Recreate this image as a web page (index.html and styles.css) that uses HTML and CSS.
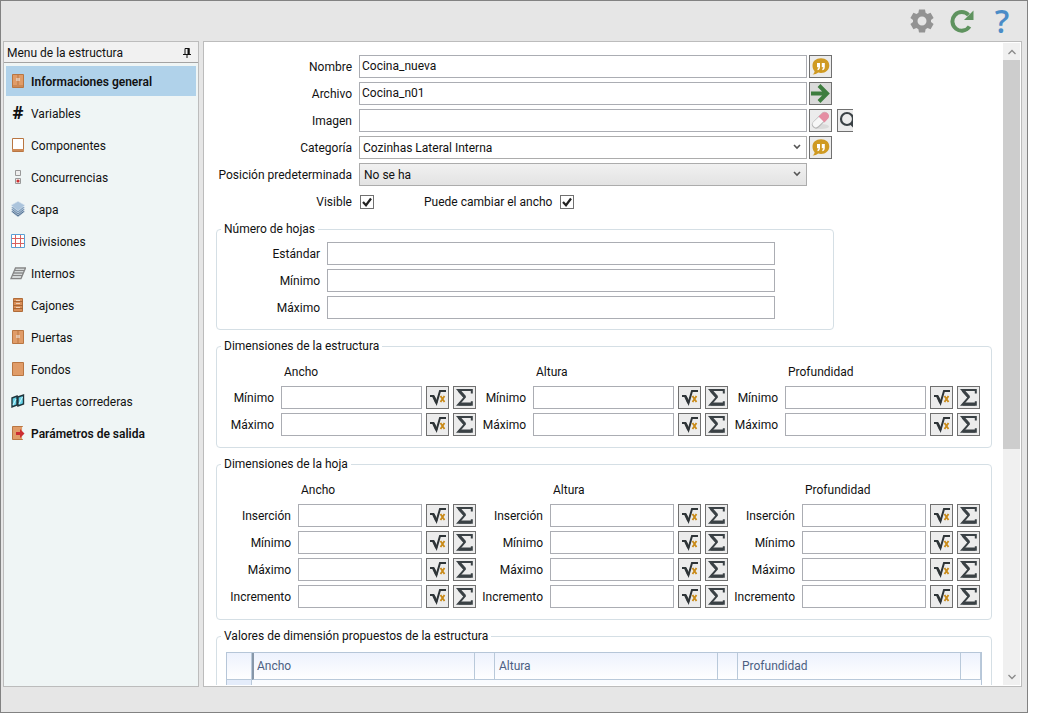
FILE: index.html
```html
<!DOCTYPE html>
<html lang="es">
<head>
<meta charset="utf-8">
<title>Menu de la estructura</title>
<link rel="stylesheet" href="styles.css">
</head>
<body>
<svg class="defs" aria-hidden="true">
  <symbol id="root" viewBox="0 0 21 21">
    <path d="M3 9h3.500l3 7L13 4h6" fill="none" stroke="#2f3538" stroke-width="2"/>
    <path d="M6.500 9.500l3 6.500" stroke="#2f3538" stroke-width="2.600"/>
    <path d="M13.500 9l4 6M17.500 9l-4 6" stroke="#c98a17" stroke-width="1.800"/>
  </symbol>
  <symbol id="sum" viewBox="0 0 21 21">
    <path d="M17.800 6.500V3H4.200l6.500 7.300L4.200 17.800h13.600v-3.600" fill="none" stroke="#3a4145" stroke-width="2"/>
    <path d="M5 3.500l6 6.800" stroke="#3a4145" stroke-width="3"/>
    <path d="M5 17h12" stroke="#3a4145" stroke-width="3"/>
  </symbol>
  <symbol id="quote" viewBox="0 0 21 21">
    <path d="M11 2.200c5 0 8.300 3 8.300 7.300s-3.500 7.500-8.300 7.500c-1 0-2-.1-2.800-.4-1.500 1.400-3.500 2-5.700 1.900 1.300-.8 2-1.900 2.100-3.300C3.200 13.800 2.500 12 2.500 9.500c0-4.300 3.500-7.300 8.500-7.300z" fill="#cf9a22"/>
    <path d="M7 7h3v4c0 2-1 3-2.500 3.200v-1.500c.7-.2 1-.8 1-1.500H7zM11.800 7h3v4c0 2-1 3-2.500 3.200v-1.500c.7-.2 1-.8 1-1.500h-1.500z" fill="#fff"/>
  </symbol>
  <symbol id="chev" viewBox="0 0 8 6"><path d="M1 1l3 3 3-3" fill="none" stroke="#555" stroke-width="1.600"/></symbol>
  <symbol id="tick" viewBox="0 0 14 14"><path d="M3 7l3 3.200 5-6.700" fill="none" stroke="#222" stroke-width="2.200"/></symbol>
</svg>

<div class="window">
  <header class="toolbar">
    <button class="tool" aria-label="Configuración"><svg viewBox="0 0 24 24"><path fill="#939393" fill-rule="evenodd" d="M9 .5h6l.6 3.300 1.900 1.100 3.100-1.100 3 5.100-2.600 2.100v2l2.600 2.100-3 5.100-3.100-1.100-1.900 1.100-.6 3.300H9l-.6-3.300-1.900-1.100-3.100 1.100-3-5.100L3 13V11L.4 8.900l3-5.100 3.100 1.100 1.900-1.100zM12 7.500a4.500 4.500 0 1 0 0 9 4.500 4.500 0 0 0 0-9z"/></svg></button>
    <button class="tool" aria-label="Actualizar"><svg viewBox="0 0 24 24"><path d="M19.500 17.500A9.300 9.300 0 1 1 18.500 6" fill="none" stroke="#5f935f" stroke-width="4"/><path d="M23.500 1.500V11H14z" fill="#5f935f"/></svg></button>
    <button class="tool help" aria-label="Ayuda">?</button>
  </header>

  <div class="body">
    <nav class="side">
      <div class="side-head"><span>Menu de la estructura</span>
        <button class="pin" aria-label="Fijar"><svg viewBox="0 0 8 10"><path d="M2 6V.5h4V6M0 6.500h8M4 6.500V10" fill="none" stroke="#111"/><path d="M5.500 0v6" stroke="#111" stroke-width="2"/></svg></button>
      </div>
      <ul class="menu">
        <li><a class="item current" href="#general"><svg viewBox="0 0 16 16"><path d="M2.500 1.500h11v13h-11z" fill="#e09c68" stroke="#b97642"/><path d="M2 13h12M8 2v10" stroke="#b97642"/><path d="M7 5v3M9 5v3" stroke="#eee"/></svg><span>Informaciones general</span></a></li>
        <li><a class="item" href="#variables"><b class="hash" aria-hidden="true">#</b><span>Variables</span></a></li>
        <li><a class="item" href="#componentes"><svg viewBox="0 0 16 16"><path d="M2.500 1.500h11v13h-11z" fill="#fff" stroke="#b97642"/><path d="M2 13h12" stroke="#cf8a55" stroke-width="2"/></svg><span>Componentes</span></a></li>
        <li><a class="item" href="#concurrencias"><svg viewBox="0 0 16 16"><path d="M5.500 1.500h5v5h-5zM5.500 9.500h5v5h-5z" fill="#eee" stroke="#999"/><circle cx="8" cy="12" r="1.600" fill="#cc2f2f"/></svg><span>Concurrencias</span></a></li>
        <li><a class="item" href="#capa"><svg viewBox="0 0 16 16"><g stroke="#dfe9f2" stroke-width=".6"><path d="M8 7l7 3.500L8 16l-7-5.500z" fill="#4f6f90"/><path d="M8 5l7 3.500L8 14 1 8.500z" fill="#6785a4"/><path d="M8 3l7 3.500L8 12 1 6.500z" fill="#7e9dbc"/><path d="M8 .3l7 4-7 5.500-7-5.500z" fill="#abc4dc"/></g></svg><span>Capa</span></a></li>
        <li><a class="item" href="#divisiones"><svg viewBox="0 0 16 16"><path d="M1.500 1.500h13v13h-13z" fill="#fff" stroke="#5a9fd4"/><path d="M5.500 2v12M10.500 2v12M2 5.500h12M2 10.500h12" stroke="#d9605e"/></svg><span>Divisiones</span></a></li>
        <li><a class="item" href="#internos"><svg viewBox="0 0 16 16"><path d="M5.500 3h10L11 13.500H1zM4.500 5.500h10M3.500 8h10M2.300 10.500h10" fill="none" stroke="#858585" stroke-width="1.300"/></svg><span>Internos</span></a></li>
        <li><a class="item" href="#cajones"><svg viewBox="0 0 16 16"><path d="M3.500 1.500h9v13h-9z" fill="#d98f58" stroke="#b06c39"/><path d="M3 4.500h10M3 8.500h10M3 11.500h10" stroke="#a66534"/><path d="M6 3.500h4M6 6.500h4M6 10.500h4" stroke="#eed1b8"/></svg><span>Cajones</span></a></li>
        <li><a class="item" href="#puertas"><svg viewBox="0 0 16 16"><path d="M2.500 1.500h11v13h-11z" fill="#e09c68" stroke="#b97642"/><path d="M8 2v12" stroke="#b97642"/><path d="M7 6v3M9 6v3" stroke="#eee"/></svg><span>Puertas</span></a></li>
        <li><a class="item" href="#fondos"><svg viewBox="0 0 16 16"><path d="M2.500 1.500h11v13h-11z" fill="#e09c68" stroke="#b97642"/></svg><span>Fondos</span></a></li>
        <li><a class="item" href="#correderas"><svg viewBox="0 0 16 16"><path d="M2 5l5-2v9l-5 2zM8 4l5.500-2v9L8 13z" fill="#64d3e8" stroke="#20333a" stroke-width="1.400"/><path d="M3 12l3-6M9 11l3.500-7" stroke="#d3f6fb"/></svg><span>Puertas correderas</span></a></li>
        <li><a class="item strong" href="#salida"><svg viewBox="0 0 16 16"><path d="M2.500 1.500h10v13h-10z" fill="#e09c68" stroke="#b97642"/><path d="M12.500 2v12" stroke="#e9eef0"/><path d="M6 7h4V4l4.500 4.500L10 13v-3H6z" fill="#cc2e33"/></svg><span>Parámetros de salida</span></a></li>
      </ul>
    </nav>

    <main class="panel">
      <div class="content">
        <form class="top-form">
          <label for="nombre">Nombre</label><input class="box" id="nombre" value="Cocina_nueva"><span class="acts"><button type="button" class="sq" aria-label="Traducir nombre"><svg><use href="#quote"/></svg></button></span>
          <label for="archivo">Archivo</label><input class="box" id="archivo" value="Cocina_n01"><span class="acts"><button type="button" class="sq pressed" aria-label="Ir al archivo"><svg viewBox="0 0 21 21"><path d="M1 10.500h16M9 2.500l8 8-8 8" fill="none" stroke="#3d7d3f" stroke-width="4"/></svg></button></span>
          <label for="imagen">Imagen</label><input class="box" id="imagen"><span class="acts"><button type="button" class="sq" aria-label="Borrar imagen"><svg viewBox="0 0 21 21"><ellipse cx="11" cy="16.500" rx="8" ry="2.500" fill="#dadada"/><path d="M6 14.500L14.500 6" stroke="#b5b5b5" stroke-width="8" stroke-linecap="round"/><path d="M6 14L14.500 6" stroke="#f7f7f7" stroke-width="6.500" stroke-linecap="round"/><path d="M8.500 6.500l4.500-4q4.500-1 6 3 0 1.500-.5 2.500l-4 4.500z" fill="#e58ea3"/></svg></button><button type="button" class="sq cut" aria-label="Buscar imagen"><svg viewBox="0 0 21 21"><circle cx="9" cy="9" r="6" fill="none" stroke="#3a4145" stroke-width="2.200"/><path d="M13 13l4 4" stroke="#3a4145" stroke-width="3.500"/></svg></button></span>
          <label for="categoria">Categoría</label><span class="pick"><select class="box white" id="categoria"><option>Cozinhas Lateral Interna</option></select><svg><use href="#chev"/></svg></span><span class="acts"><button type="button" class="sq" aria-label="Traducir categoría"><svg><use href="#quote"/></svg></button></span>
          <label for="posicion">Posición predeterminada</label><span class="pick"><select class="box" id="posicion"><option>No se ha</option></select><svg><use href="#chev"/></svg></span><span class="acts"></span>
          <label for="visible">Visible</label>
          <div class="checks"><span class="check"><input type="checkbox" id="visible" checked><svg><use href="#tick"/></svg></span>
            <label for="cambiar">Puede cambiar el ancho</label><span class="check"><input type="checkbox" id="cambiar" checked><svg><use href="#tick"/></svg></span></div>
        </form>

        <fieldset class="group narrow">
          <legend>Número de hojas</legend>
          <div class="leaves">
            <label for="h1">Estándar</label><input class="box" id="h1">
            <label for="h2">Mínimo</label><input class="box" id="h2">
            <label for="h3">Máximo</label><input class="box" id="h3">
          </div>
        </fieldset>

        <fieldset class="group">
          <legend>Dimensiones de la estructura</legend>
          <div class="dims">
            <div class="dim"><h3>Ancho</h3>
              <label for="ea1">Mínimo</label><input class="box" id="ea1"><button class="sq" aria-label="Fórmula"><svg><use href="#root"/></svg></button><button class="sq" aria-label="Suma"><svg><use href="#sum"/></svg></button>
              <label for="ea2">Máximo</label><input class="box" id="ea2"><button class="sq" aria-label="Fórmula"><svg><use href="#root"/></svg></button><button class="sq" aria-label="Suma"><svg><use href="#sum"/></svg></button>
            </div>
            <div class="dim"><h3>Altura</h3>
              <label for="eb1">Mínimo</label><input class="box" id="eb1"><button class="sq" aria-label="Fórmula"><svg><use href="#root"/></svg></button><button class="sq" aria-label="Suma"><svg><use href="#sum"/></svg></button>
              <label for="eb2">Máximo</label><input class="box" id="eb2"><button class="sq" aria-label="Fórmula"><svg><use href="#root"/></svg></button><button class="sq" aria-label="Suma"><svg><use href="#sum"/></svg></button>
            </div>
            <div class="dim"><h3>Profundidad</h3>
              <label for="ec1">Mínimo</label><input class="box" id="ec1"><button class="sq" aria-label="Fórmula"><svg><use href="#root"/></svg></button><button class="sq" aria-label="Suma"><svg><use href="#sum"/></svg></button>
              <label for="ec2">Máximo</label><input class="box" id="ec2"><button class="sq" aria-label="Fórmula"><svg><use href="#root"/></svg></button><button class="sq" aria-label="Suma"><svg><use href="#sum"/></svg></button>
            </div>
          </div>
        </fieldset>

        <fieldset class="group">
          <legend>Dimensiones de la hoja</legend>
          <div class="dims wide">
            <div class="dim"><h3>Ancho</h3>
              <label for="ha1">Inserción</label><input class="box" id="ha1"><button class="sq" aria-label="Fórmula"><svg><use href="#root"/></svg></button><button class="sq" aria-label="Suma"><svg><use href="#sum"/></svg></button>
              <label for="ha2">Mínimo</label><input class="box" id="ha2"><button class="sq" aria-label="Fórmula"><svg><use href="#root"/></svg></button><button class="sq" aria-label="Suma"><svg><use href="#sum"/></svg></button>
              <label for="ha3">Máximo</label><input class="box" id="ha3"><button class="sq" aria-label="Fórmula"><svg><use href="#root"/></svg></button><button class="sq" aria-label="Suma"><svg><use href="#sum"/></svg></button>
              <label for="ha4">Incremento</label><input class="box" id="ha4"><button class="sq" aria-label="Fórmula"><svg><use href="#root"/></svg></button><button class="sq" aria-label="Suma"><svg><use href="#sum"/></svg></button>
            </div>
            <div class="dim"><h3>Altura</h3>
              <label for="hb1">Inserción</label><input class="box" id="hb1"><button class="sq" aria-label="Fórmula"><svg><use href="#root"/></svg></button><button class="sq" aria-label="Suma"><svg><use href="#sum"/></svg></button>
              <label for="hb2">Mínimo</label><input class="box" id="hb2"><button class="sq" aria-label="Fórmula"><svg><use href="#root"/></svg></button><button class="sq" aria-label="Suma"><svg><use href="#sum"/></svg></button>
              <label for="hb3">Máximo</label><input class="box" id="hb3"><button class="sq" aria-label="Fórmula"><svg><use href="#root"/></svg></button><button class="sq" aria-label="Suma"><svg><use href="#sum"/></svg></button>
              <label for="hb4">Incremento</label><input class="box" id="hb4"><button class="sq" aria-label="Fórmula"><svg><use href="#root"/></svg></button><button class="sq" aria-label="Suma"><svg><use href="#sum"/></svg></button>
            </div>
            <div class="dim"><h3>Profundidad</h3>
              <label for="hc1">Inserción</label><input class="box" id="hc1"><button class="sq" aria-label="Fórmula"><svg><use href="#root"/></svg></button><button class="sq" aria-label="Suma"><svg><use href="#sum"/></svg></button>
              <label for="hc2">Mínimo</label><input class="box" id="hc2"><button class="sq" aria-label="Fórmula"><svg><use href="#root"/></svg></button><button class="sq" aria-label="Suma"><svg><use href="#sum"/></svg></button>
              <label for="hc3">Máximo</label><input class="box" id="hc3"><button class="sq" aria-label="Fórmula"><svg><use href="#root"/></svg></button><button class="sq" aria-label="Suma"><svg><use href="#sum"/></svg></button>
              <label for="hc4">Incremento</label><input class="box" id="hc4"><button class="sq" aria-label="Fórmula"><svg><use href="#root"/></svg></button><button class="sq" aria-label="Suma"><svg><use href="#sum"/></svg></button>
            </div>
          </div>
        </fieldset>

        <fieldset class="group last">
          <legend>Valores de dimensión propuestos de la estructura</legend>
          <table class="grid">
            <colgroup><col class="c-row"><col><col class="c-btn"><col><col class="c-btn"><col><col class="c-btn"></colgroup>
            <thead><tr><th></th><th class="first">Ancho</th><th></th><th>Altura</th><th></th><th>Profundidad</th><th></th></tr></thead>
            <tbody><tr><td class="mark"></td><td></td><td></td><td></td><td></td><td></td><td></td></tr></tbody>
          </table>
        </fieldset>
      </div>
      <div class="scroll">
        <button aria-label="Subir"><svg viewBox="0 0 8 6"><path d="M.5 5L4 1.500 7.500 5" fill="none" stroke="#8a8a8a" stroke-width="1.300"/></svg></button>
        <div class="track"><div class="thumb"></div></div>
        <button aria-label="Bajar"><svg viewBox="0 0 8 6"><path d="M.5 1L4 4.500 7.500 1" fill="none" stroke="#8a8a8a" stroke-width="1.300"/></svg></button>
      </div>
    </main>
  </div>
</div>
</body>
</html>
```
FILE: styles.css
```css
* { box-sizing: border-box; }
body {
  margin: 0;
  height: 100vh;
  padding: 0 10px 15px 0;
  background: #fff;
  color: #111;
  font: 12px/16px Roboto, "Noto Sans", sans-serif;
}
.defs { position: absolute; width: 0; height: 0; }
button, input, select { font: inherit; color: inherit; margin: 0; }
button { padding: 0; border: 0; background: none; }
svg { display: block; }

.window {
  height: 100%;
  display: flex;
  flex-direction: column;
  padding: 0 5px 25px 2px;
  border: 1px solid #828282;
  background: #e6e6e6;
}
.toolbar {
  flex: none;
  height: 40px;
  display: flex;
  justify-content: flex-end;
  align-items: center;
  gap: 16px;
  padding-right: 8px;
}
.tool { width: 24px; height: 24px; }
.tool svg { width: 24px; height: 24px; }
.help { font: 600 32px/24px "Open Sans", sans-serif; color: #4a8cc7; }

.body { flex: 1; min-height: 0; display: flex; gap: 4px; }
.side {
  flex: none;
  width: 196px;
  border: 1px solid #bcbcbc;
  background: #eff5f5;
}
.side-head {
  display: flex;
  justify-content: space-between;
  align-items: center;
  height: 21px;
  padding: 1px 7px 0 3px;
  border-bottom: 1px solid #a3a3a3;
  background: #f1f1f1;
}
.pin svg { width: 8px; height: 10px; }
.menu {
  list-style: none;
  margin: 0;
  padding: 3px 2px;
  display: flex;
  flex-direction: column;
  gap: 2px;
}
.item {
  display: flex;
  align-items: center;
  gap: 5px;
  height: 30px;
  padding-left: 4px;
  color: inherit;
  text-decoration: none;
}
.item svg { width: 16px; height: 16px; }
.item span { padding-top: 2px; }
.hash { width: 16px; text-align: center; font: bold 17px/16px "Open Sans", sans-serif; }
.current { background: #b0d2ea; font-weight: 600; }
.strong { font-weight: 600; }

.panel {
  flex: 1;
  min-width: 0;
  display: flex;
  padding: 1px 1px 1px 0;
  border: 1px solid #bcbcbc;
  background: #fff;
}
.content {
  flex: 1;
  min-width: 0;
  overflow-y: auto;
  overflow-x: hidden;
  scrollbar-width: none;
  padding: 12px 11px 12px 12px;
}
.top-form {
  display: grid;
  grid-template-columns: 136px minmax(0, 455px) 46px;
  align-items: center;
  row-gap: 4px;
}
label { text-align: right; white-space: nowrap; }
.box {
  display: block;
  width: 100%;
  min-width: 0;
  height: 23px;
  padding: 0 2px 2px;
  border: 1px solid #abadb3;
  border-radius: 0;
  background: #fff;
  outline: 0;
}
.top-form > .box { margin-left: 7px; width: auto; }
.pick { position: relative; display: block; margin-left: 7px; }
.pick select {
  appearance: none;
  padding: 0 20px 0 4px;
  border-color: #acacac;
  background: linear-gradient(#f1f1f1, #e3e3e3);
}
.pick .white { padding-left: 3px; background: #fff; }
.pick svg {
  position: absolute;
  right: 6px;
  top: 8px;
  width: 8px;
  height: 6px;
  pointer-events: none;
}
.acts { display: flex; gap: 5px; padding-left: 2px; overflow: hidden; }
.sq {
  flex: none;
  width: 23px;
  height: 23px;
  border: 1px solid #707070;
  background: #ececec;
}
.sq svg { width: 21px; height: 21px; }
.pressed { background: #dadada; }
.checks {
  grid-column: 2 / 4;
  display: flex;
  align-items: center;
  height: 23px;
  padding-left: 8px;
}
.checks label { margin: 0 8px 0 50px; }
.check { position: relative; width: 14px; height: 14px; }
.check input {
  display: block;
  appearance: none;
  width: 14px;
  height: 14px;
  border: 1px solid #707070;
  background: #fff;
}
.check svg {
  position: absolute;
  inset: 0;
  width: 14px;
  height: 14px;
  visibility: hidden;
  pointer-events: none;
}
.check input:checked + svg { visibility: visible; }

.group {
  min-width: 0;
  margin: 8px 0 0;
  padding: 5px 11px 11px 7px;
  border: 1px solid #d5dfe5;
  border-radius: 4px;
}
.group legend { margin-left: -3px; padding: 0 3px; }
.narrow { max-width: 618px; padding: 5px 58px 10px 7px; }
.leaves {
  display: grid;
  grid-template-columns: 96px minmax(0, 1fr);
  gap: 4px 7px;
  align-items: center;
}
.dims { display: grid; grid-template-columns: repeat(3, minmax(0, 1fr)); }
.dim {
  display: grid;
  grid-template-columns: 50px minmax(0, 1fr) 23px 23px;
  gap: 4px;
  align-items: center;
}
.wide .dim { grid-template-columns: 67px minmax(0, 1fr) 23px 23px; }
.dim .box { margin-left: 3px; width: auto; }
.dim h3 {
  grid-column: 2 / 5;
  margin: 0;
  padding: 5px 0 2px 6px;
  font: inherit;
}
.last { padding: 8px 9px; }
.last legend { margin-left: -5px; }
.grid {
  width: 100%;
  table-layout: fixed;
  border-collapse: separate;
  border-spacing: 0;
  border: solid #b6c6d8;
  border-width: 1px 1px 0;
  color: #4c5f82;
}
.c-row { width: 25px; }
.c-btn { width: 20px; }
.grid th {
  height: 27px;
  padding: 0 4px;
  border: solid #b9c9da;
  border-width: 0 1px 1px 0;
  background: linear-gradient(#edf2fd, #fff);
  text-align: left;
  font-weight: 400;
}
.grid .first { padding-left: 3px; border-left: 2px solid #8797a9; }
.grid td {
  height: 22px;
  padding: 0;
  background: #f9fbfe;
  border-bottom: 1px solid #d5dfea;
}
.grid .mark { background: #e4ecfa; border-right: 1px solid #b9c9da; }

.scroll {
  flex: none;
  width: 17px;
  display: flex;
  flex-direction: column;
  background: #f0f0f0;
}
.scroll button {
  height: 17px;
  display: flex;
  align-items: center;
  justify-content: center;
}
.scroll svg { width: 8px; height: 6px; }
.track { flex: 1; }
.thumb { height: 64%; background: #cdcdcd; }
```
